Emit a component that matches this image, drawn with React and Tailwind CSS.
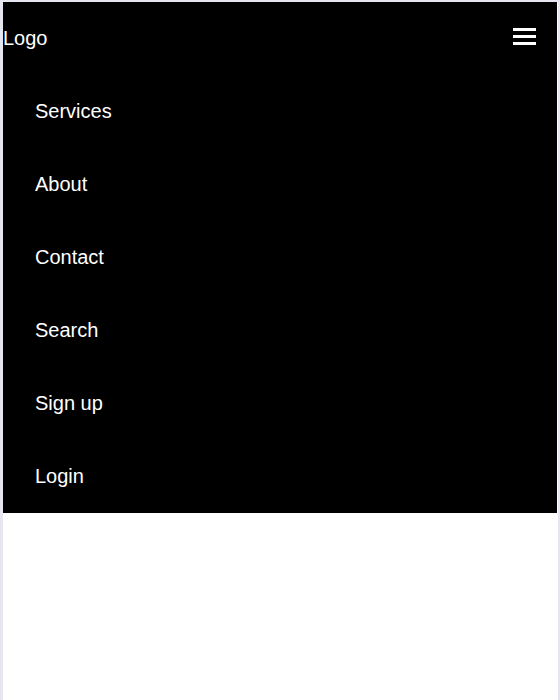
export default function App() {
  const items = ["Services", "About", "Contact", "Search", "Sign up", "Login"];
  return (
    <div
      className="h-[700px] w-[560px] bg-white border-t-2 border-l-[3px] border-r-2 border-[#e6e6f0] overflow-hidden"
      style={{ fontFamily: '"Liberation Sans", Arial, sans-serif' }}
    >
      <nav className="bg-black text-white mr-px">
        <div className="flex h-[73px] items-center justify-between pr-[21px]">
          <span className="text-[20px] leading-[23px] -mt-px">Logo</span>
          <div className="flex w-[23px] flex-col gap-1 -mt-1">
            <div className="h-[3px] bg-white" />
            <div className="h-[3px] bg-white" />
            <div className="h-[3px] bg-white" />
          </div>
        </div>
        <ul className="flex flex-col">
          {items.map((t) => (
            <li key={t} className="flex h-[73px] items-center pl-8 text-[20px] leading-[23px]">
              {t}
            </li>
          ))}
        </ul>
      </nav>
    </div>
  );
}
